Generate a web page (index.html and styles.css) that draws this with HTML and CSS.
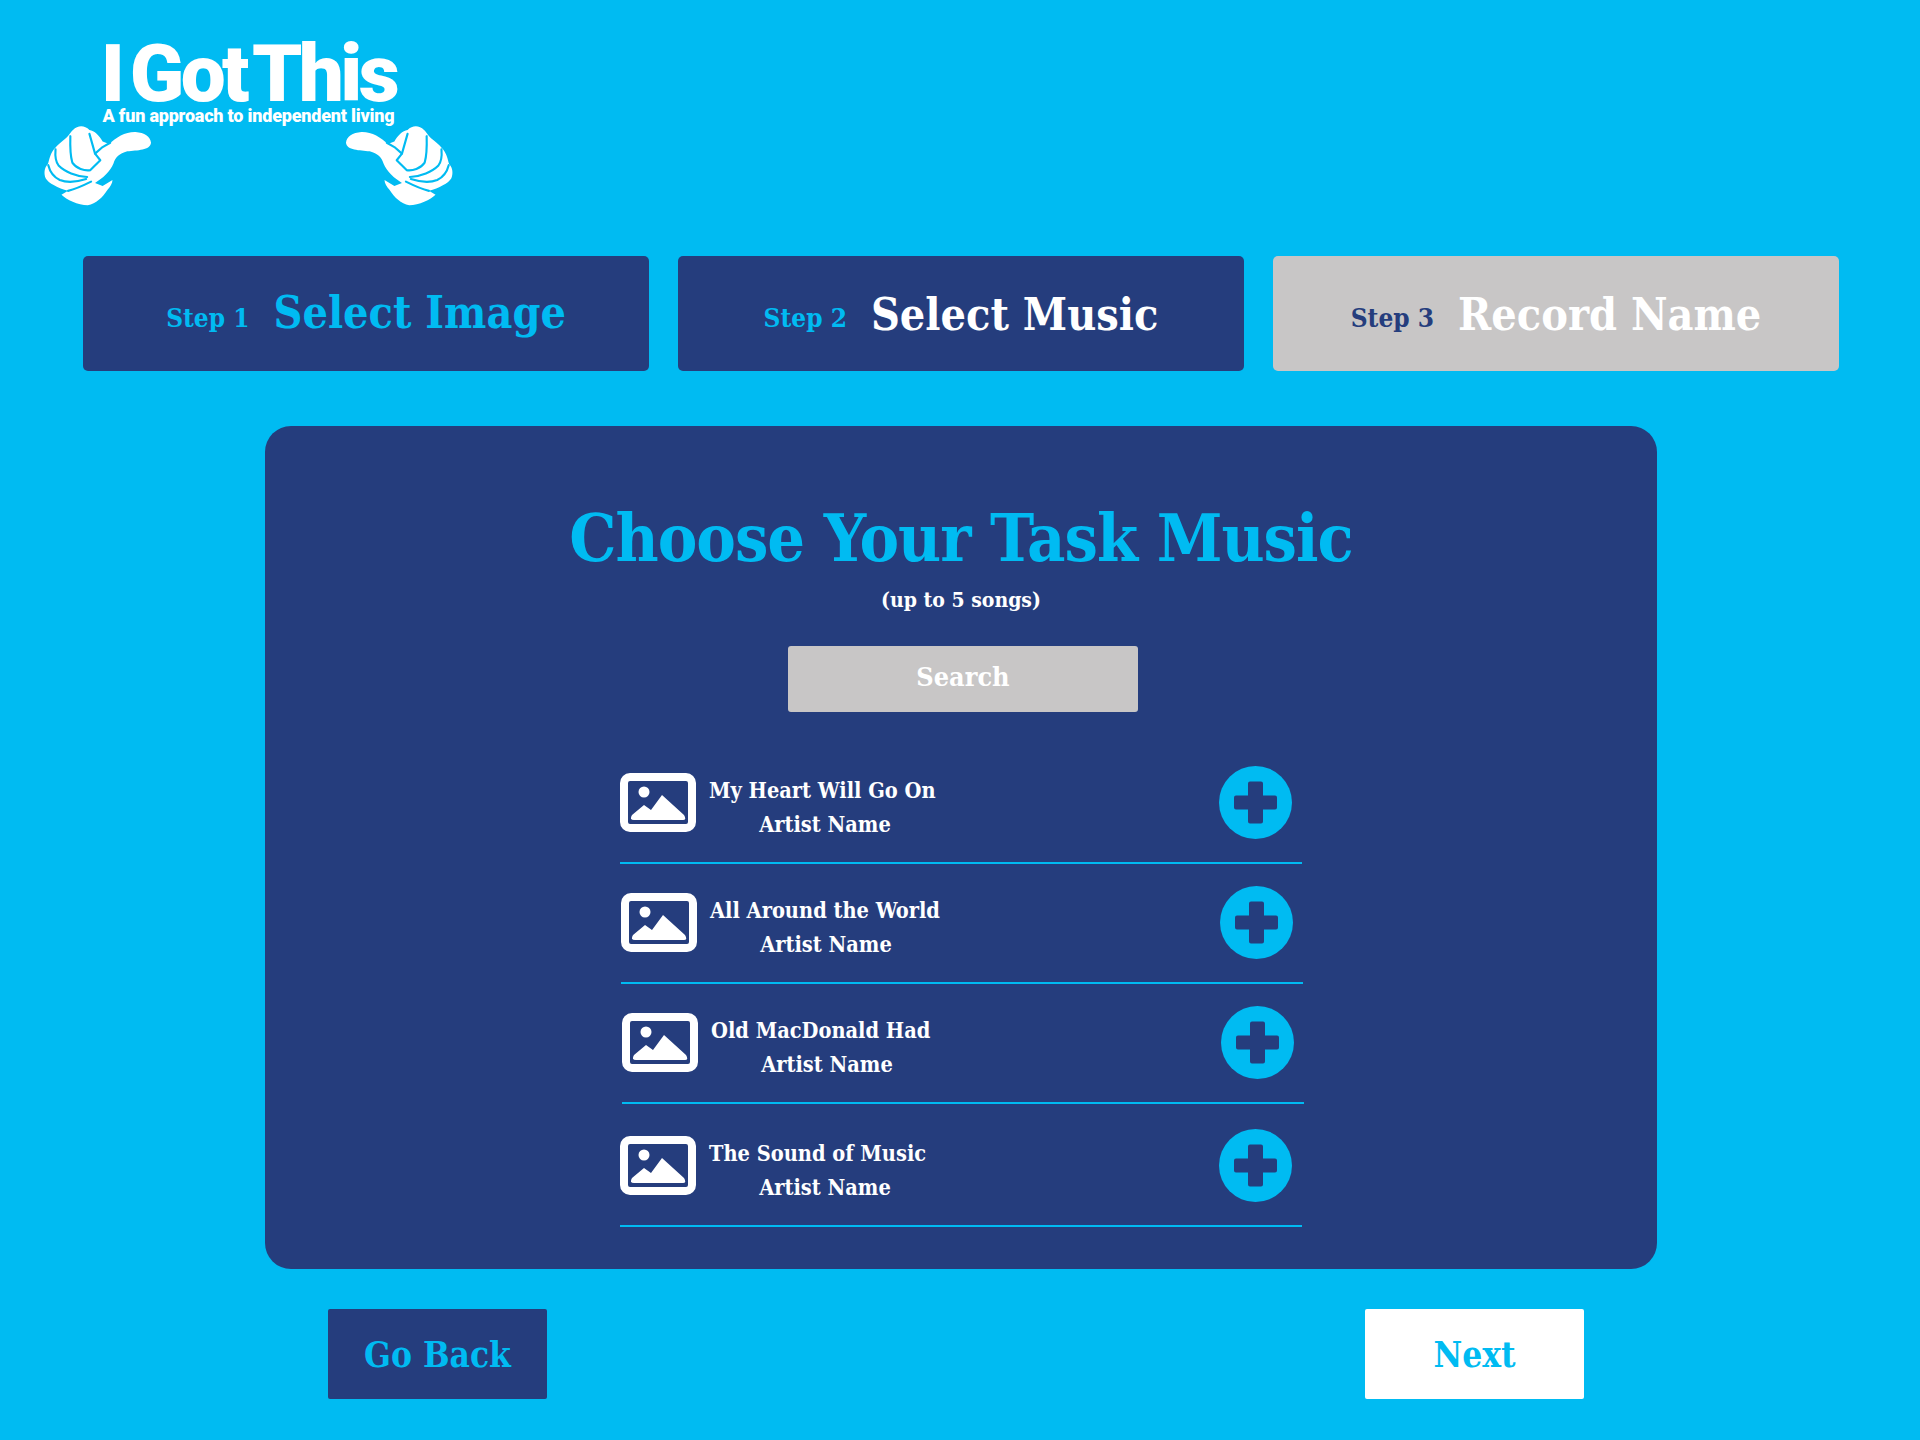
FILE: index.html
```html
<!DOCTYPE html>
<html lang="en">
<head>
  <meta charset="UTF-8">
  <title>I Got This - Choose Your Task Music</title>
  <link rel="stylesheet" href="styles.css">
</head>
<body>
  <svg class="defs" width="0" height="0">
    <symbol id="hand" viewBox="25 18 332 246">
      <path fill="#fff" d="M352 72C350 52 332 41 305 39C275 38 245 55 225 76L205 68C195 50 180 35 165 33C150 18 130 18 115 33C105 42 105 50 85 65C68 78 52 95 47 110C42 122 42 130 38 138C28 148 26 165 32 180C40 195 70 210 100 218L80 230C95 245 130 262 160 262C185 258 205 238 220 215C228 205 235 195 235 185L205 203L182 194C205 180 228 160 238 135C245 115 255 105 280 98C310 95 350 95 352 72Z"/>
      <g fill="none" stroke="#00bbf2" stroke-width="6.500" stroke-linecap="round" stroke-linejoin="round">
        <path d="M107 52C106 85 108 115 113 132C125 150 150 158 168 155L198 125L182 105L165 45"/>
        <path d="M182 105L205 85L228 72"/>
        <path d="M62 92C60 115 62 130 72 142C90 160 125 175 158 176"/>
        <path d="M40 140C45 160 55 175 75 185C100 195 130 190 155 182"/>
        <path d="M100 218C125 212 150 200 170 190"/>
      </g>
    </symbol>
    <symbol id="picture" viewBox="0 0 76 59">
      <rect x="4" y="4" width="68" height="51" rx="6" fill="none" stroke="#fff" stroke-width="8"/>
      <ellipse cx="24" cy="19" rx="5.5" ry="5.5" fill="#fff"/>
      <path fill="#fff" d="M12 42L24 32L31 37L42 22L64 42Q67 47 63 47H14Q9 47 12 42Z"/>
    </symbol>
    <symbol id="plus" viewBox="0 0 73 73">
      <circle cx="36.5" cy="36.5" r="36.5" fill="#00bbf2"/>
      <path fill="#253d7d" d="M31 15.500H42Q44 15.500 44 17.500V29.500H56Q58 29.500 58 31.500V41.500Q58 43.500 56 43.500H44V55.500Q44 57.500 42 57.500H31Q29 57.500 29 55.500V43.500H17Q15 43.500 15 41.500V31.500Q15 29.500 17 29.500H29V17.500Q29 15.500 31 15.500Z"/>
    </symbol>
  </svg>

  <header class="logo">
    <div class="logo-name">I Got This</div>
    <div class="logo-tag">A fun approach to independent living</div>
    <div class="logo-hands">
      <svg class="hand"><use href="#hand"/></svg>
      <svg class="hand hand-right"><use href="#hand"/></svg>
    </div>
  </header>

  <nav class="steps">
    <div class="step step-up">
      <span class="step-num">Step 1</span>
      <span class="step-name">Select Image</span>
    </div>
    <div class="step">
      <span class="step-num">Step 2</span>
      <span class="step-name step-current">Select Music</span>
    </div>
    <div class="step step-todo">
      <span class="step-num">Step 3</span>
      <span class="step-name">Record Name</span>
    </div>
  </nav>

  <main class="panel">
    <h1>Choose Your Task Music</h1>
    <p class="hint">(up to 5 songs)</p>
    <div class="search">Search</div>

    <ul class="songs">
      <li class="song">
        <svg class="song-pic"><use href="#picture"/></svg>
        <div class="song-text">
          <div class="song-title">My Heart Will Go On</div>
          <div class="song-artist">Artist Name</div>
        </div>
        <svg class="song-add"><use href="#plus"/></svg>
      </li>
      <li class="song shift-1">
        <svg class="song-pic"><use href="#picture"/></svg>
        <div class="song-text">
          <div class="song-title">All Around the World</div>
          <div class="song-artist">Artist Name</div>
        </div>
        <svg class="song-add"><use href="#plus"/></svg>
      </li>
      <li class="song shift-2">
        <svg class="song-pic"><use href="#picture"/></svg>
        <div class="song-text">
          <div class="song-title">Old MacDonald Had</div>
          <div class="song-artist">Artist Name</div>
        </div>
        <svg class="song-add"><use href="#plus"/></svg>
      </li>
      <li class="song song-last">
        <svg class="song-pic"><use href="#picture"/></svg>
        <div class="song-text">
          <div class="song-title">The Sound of Music</div>
          <div class="song-artist">Artist Name</div>
        </div>
        <svg class="song-add"><use href="#plus"/></svg>
      </li>
    </ul>
  </main>

  <footer class="actions">
    <div class="btn btn-back">Go Back</div>
    <div class="btn btn-next">Next</div>
  </footer>
</body>
</html>
```

FILE: styles.css
```css
* { box-sizing: border-box; }
body { margin: 0; height: 1440px; overflow: hidden; background: #00bbf2; font-family: "DejaVu Serif Condensed", "DejaVu Serif", "Liberation Serif", serif; font-stretch: condensed; font-weight: bold; color: #fff; }
.defs { display: block; height: 0; }

.logo { height: 256px; width: 411px; margin-left: 43px; padding-top: 42px; display: flex; flex-direction: column; align-items: center; font-family: Roboto, "Open Sans", sans-serif; font-stretch: normal; font-weight: 900; }
.logo-name { font-size: 80px; line-height: 64px; letter-spacing: -3.6px; word-spacing: -8px; white-space: nowrap; }
.logo-tag { font-size: 18px; line-height: 19px; letter-spacing: -0.2px; white-space: nowrap; }
.logo-hands { width: 100%; display: flex; justify-content: space-between; }
.hand { width: 110px; height: 81px; }
.hand-right { transform: scaleX(-1); }

.steps { display: flex; gap: 29px; padding: 0 81px 0 83px; }
.step { width: 566px; height: 115px; background: #253d7d; border-radius: 5px; display: flex; align-items: center; justify-content: center; gap: 24px; color: #00bbf2; }
.step-num { font-size: 26px; padding-top: 8px; }
.step-name { font-size: 44.5px; }
.step-up .step-name { padding-bottom: 3px; }
.step-current { color: #fff; }
.step-todo { background: #c8c6c6; color: #fff; }
.step-todo .step-num { color: #253d7d; }

.panel { width: 1392px; height: 843px; margin: 55px 0 0 265px; background: #253d7d; border-radius: 26px; padding-top: 72px; text-align: center; }
.panel h1 { margin: 0; font-size: 66px; line-height: 80px; color: #00bbf2; letter-spacing: -1px; }
.hint { margin: 0; font-size: 21px; line-height: 26px; padding-top: 9px; }
.search { width: 350px; height: 66px; margin: 33px 0 0 523px; background: #c8c6c6; border-radius: 3px; font-size: 26.8px; line-height: 62px; }

.songs { list-style: none; margin: 32px 0 0 355px; padding: 0; width: 682px; }
.song { height: 120px; padding-top: 22px; display: flex; align-items: flex-start; border-bottom: 2px solid #00bbf2; text-align: left; font-size: 21.6px; }
.shift-1 { margin: 0 -1px 0 1px; }
.shift-2 { margin: 0 -2px 0 2px; }
.song-last { height: 123px; padding-top: 25px; }
.song-pic { width: 76px; height: 59px; margin-top: 7px; flex-shrink: 0; }
.song-text { width: 232px; margin-left: 13px; line-height: 34px; padding-top: 8px; white-space: nowrap; }
.song-artist { text-align: center; }
.song-add { width: 73px; height: 73px; margin-left: auto; margin-right: 10px; }

.actions { display: flex; justify-content: space-between; padding: 0 336px 0 328px; margin-top: 40px; }
.btn { width: 219px; height: 90px; border-radius: 2px; text-align: center; font-size: 35px; line-height: 92px; color: #00bbf2; }
.btn-back { background: #253d7d; }
.btn-next { background: #fff; }
```
